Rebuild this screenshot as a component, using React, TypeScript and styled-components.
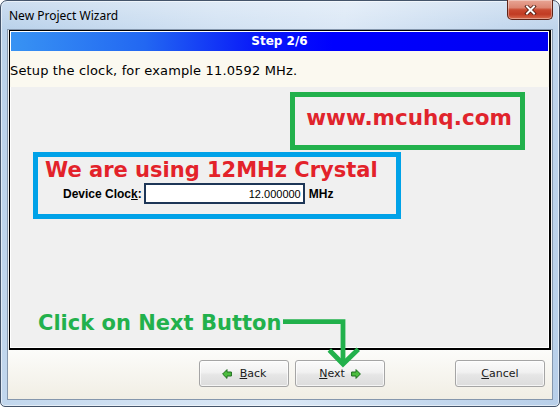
import React from 'react';
import styled, { createGlobalStyle } from 'styled-components';

const GlobalStyle = createGlobalStyle`
	html, body {
		margin: 0;
		padding: 0;
		width: 560px;
		height: 407px;
		overflow: hidden;
		background: #ffffff;
	}
`

const LeftArrow: React.FC = () => (
	<svg width="10" height="10" viewBox="0 0 10 10">
		<polygon points="0.6,5 5,0.6 5,3 9.4,3 9.4,7 5,7 5,9.4" fill="#4cbd3e" stroke="#1f6d1f" strokeWidth="1" strokeLinejoin="round" />
	</svg>
)

const RightArrow: React.FC = () => (
	<svg width="10" height="10" viewBox="0 0 10 10">
		<polygon points="9.4,5 5,0.6 5,3 0.6,3 0.6,7 5,7 5,9.4" fill="#4cbd3e" stroke="#1f6d1f" strokeWidth="1" strokeLinejoin="round" />
	</svg>
)

const App: React.FC = () => {
	return (
		<>
			<GlobalStyle />
			<Window>
				<TitleBar>
					<Title>New Project Wizard</Title>
					<CloseButton>
						<svg width="13" height="10" viewBox="0 0 13 10">
							<path d="M3 1.5 L10 8.5 M10 1.5 L3 8.5" stroke="#4a1409" strokeWidth="3.6" strokeLinecap="square" />
							<path d="M3 1.5 L10 8.5 M10 1.5 L3 8.5" stroke="#ffffff" strokeWidth="2" strokeLinecap="square" />
						</svg>
					</CloseButton>
				</TitleBar>

				<Client>
					<Panel>
						<StepHeader>Step 2/6</StepHeader>
						<Intro>Setup the clock, for example 11.0592 MHz.</Intro>

						<Body>
							<SiteBox>www.mcuhq.com</SiteBox>
							<CrystalBox>
								<CrystalTitle>We are using 12MHz Crystal</CrystalTitle>
								<ClockRow>
									<ClockLabel>Device Cloc<u>k</u>:</ClockLabel>
									<ClockInput readOnly value="12.000000" />
									<ClockUnit>MHz</ClockUnit>
								</ClockRow>
							</CrystalBox>
							<Spacer />
							<Callout>Click on Next Button</Callout>
						</Body>
					</Panel>

					<ButtonBar>
						<WizardButton>
							<LeftArrow />
							<span><u>B</u>ack</span>
						</WizardButton>
						<WizardButton $gap={6}>
							<span><u>N</u>ext</span>
							<RightArrow />
						</WizardButton>
						<WizardButton $push>
							<span><u>C</u>ancel</span>
						</WizardButton>
					</ButtonBar>
				</Client>

				<CalloutArrow width="86" height="54" viewBox="0 0 86 54">
					<path d="M5 5.7 H65 V47" fill="none" stroke="#22b14c" strokeWidth="4.8" />
					<path d="M51.3 34 L65 48 L80.3 33.3" fill="none" stroke="#22b14c" strokeWidth="4.8" />
				</CalloutArrow>
			</Window>
		</>
	)
}

export default App

const Window = styled.div`
	position: relative;
	width: 560px;
	height: 407px;
	box-sizing: border-box;
	display: flex;
	flex-direction: column;
	border: 1px solid #44546a;
	border-radius: 7px 7px 5px 5px;
	background:
		linear-gradient(to bottom, rgba(255, 255, 255, 0.3), rgba(255, 255, 255, 0) 28px),
		linear-gradient(100deg, #b9d1ea 0%, #d2e2f3 35%, #dbe8f6 55%, #c4d8ee 80%, #b8cfe9 100%);
	box-shadow: inset 0 0 0 1px rgba(255, 255, 255, 0.55);
	font-family: "DejaVu Sans", Verdana, sans-serif;
`

const TitleBar = styled.div`
	display: flex;
	height: 28px;
	flex-shrink: 0;
	padding-left: 8px;
`

const Title = styled.span`
	align-self: center;
	font-family: "Noto Sans", "Open Sans", sans-serif;
	font-size: 12px;
	color: #000000;
`

const CloseButton = styled.div`
	align-self: flex-start;
	margin: -1px 6px 0 auto;
	width: 46px;
	height: 20px;
	box-sizing: border-box;
	display: flex;
	align-items: center;
	justify-content: center;
	border: 1px solid #5e2418;
	border-top: none;
	border-radius: 0 0 5px 5px;
	background: linear-gradient(#e8a595 0%, #dc8672 40%, #c9482f 52%, #c13b23 75%, #d96b4d 100%);
	box-shadow: inset 0 0 0 1px rgba(255, 255, 255, 0.35);
`

const Client = styled.div`
	flex: 1;
	min-height: 0;
	display: flex;
	flex-direction: column;
	margin: 0 6px 6px 6px;
	border: 1px solid #8597ad;
	background: #f0f0f0;
`

const Panel = styled.div`
	flex: 1;
	min-height: 0;
	display: flex;
	flex-direction: column;
	margin: 0 1px;
	border: 1px solid #000000;
	border-right-width: 2px;
	border-bottom-width: 2px;
	box-shadow: inset 0 0 0 1px #ffffff;
	background: #f0f0f0;
`

const StepHeader = styled.div`
	margin: 1px 1px 0 1px;
	height: 19px;
	line-height: 19px;
	text-align: center;
	color: #ffffff;
	font-weight: bold;
	font-size: 12px;
	background: linear-gradient(to right, #3893f3 0%, #2267f2 25%, #0a1cf8 45%, #0000ff 60%, #0000f2 100%);
`

const Intro = styled.div`
	padding: 12px 0 8px 0;
	font-size: 13px;
	line-height: 16px;
	letter-spacing: 0.15px;
	color: #000000;
	background: #fbf9f0;
`

const Body = styled.div`
	flex: 1;
	display: flex;
	flex-direction: column;
	align-items: flex-start;
	padding: 5px 0 12px 0;
`

const SiteBox = styled.div`
	margin-left: 280px;
	width: 235px;
	height: 58px;
	box-sizing: border-box;
	display: flex;
	justify-content: center;
	padding: 8px 0 0 3px;
	border: 5px solid #22b14c;
	font-weight: bold;
	font-size: 21.5px;
	line-height: 25px;
	color: #e0242c;
`

const CrystalBox = styled.div`
	margin: 2px 0 0 23px;
	width: 368px;
	height: 67px;
	box-sizing: border-box;
	padding: 1px 0 0 7px;
	border: 5px solid #00a2e8;
`

const CrystalTitle = styled.div`
	font-weight: bold;
	font-size: 21px;
	line-height: 25px;
	color: #e3222a;
`

const ClockRow = styled.div`
	display: flex;
	align-items: center;
	margin-left: 18px;
	font-family: "Liberation Sans", Arial, sans-serif;
	color: #000000;
`

const ClockLabel = styled.span`
	font-weight: bold;
	font-size: 12px;
	margin-right: 2px;
`

const ClockInput = styled.input`
	width: 161px;
	height: 21px;
	box-sizing: border-box;
	margin: 0;
	padding: 0 2px;
	border: 2px solid #1d3657;
	background: #ffffff;
	font-family: "Liberation Sans", Arial, sans-serif;
	font-size: 11px;
	text-align: right;
	color: #000000;
	outline: none;
`

const ClockUnit = styled.span`
	font-weight: bold;
	font-size: 12px;
	margin-left: 4px;
`

const Spacer = styled.div`
	flex: 1;
`

const Callout = styled.div`
	margin-left: 28px;
	font-weight: bold;
	font-size: 21px;
	line-height: 25px;
	color: #22b14c;
`

const ButtonBar = styled.div`
	height: 49px;
	flex-shrink: 0;
	box-sizing: border-box;
	display: flex;
	align-items: flex-start;
	gap: 6px;
	padding: 10px 6px 0 191px;
	background: linear-gradient(#fcfcfa, #f1eee4);
`

const WizardButton = styled.div<{ $gap?: number; $push?: boolean }>`
	width: 90px;
	height: 27px;
	box-sizing: border-box;
	display: flex;
	align-items: center;
	justify-content: center;
	gap: ${({ $gap }) => $gap ?? 8}px;
	margin-left: ${({ $push }) => ($push ? '64px' : '0')};
	border: 1px solid #a5a5a5;
	border-radius: 3px;
	background: linear-gradient(#fbfbfb 0%, #f1f1f1 45%, #e6e6e6 55%, #dcdcdc 100%);
	box-shadow: inset 0 0 0 1px rgba(255, 255, 255, 0.7);
	font-size: 11px;
	color: #1a1a1a;
`

const CalloutArrow = styled.svg`
	position: absolute;
	left: 277px;
	top: 315px;
`
